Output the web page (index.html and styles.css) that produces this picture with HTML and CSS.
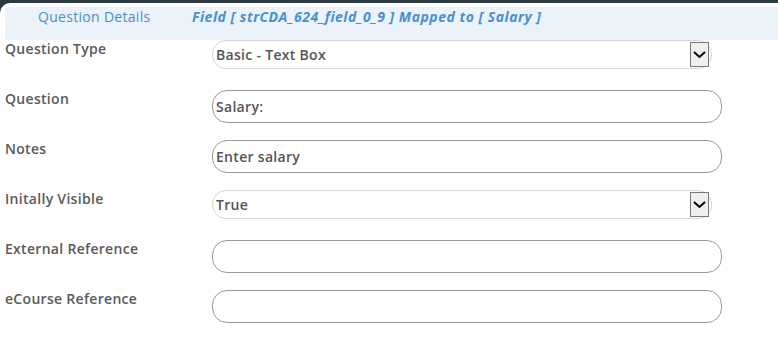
FILE: index.html
```html
<!DOCTYPE html>
<html>
<head>
  <meta charset='UTF-8'>
  <title>Question Details</title>
  <link rel="stylesheet" href="styles.css">
</head>
<body>
  <div class='painel'>
    <div class='faixa'>
      <span class='titulo'>Question Details</span>
      <span class='campo'>Field [ strCDA_624_field_0_9 ] Mapped to [ Salary ]</span>
    </div>

    <div class='linha'>
      <label class='rotulo'>Question Type</label>
      <div class='caixa-select'>
        <span class='valor'>Basic - Text Box</span>
        <span class='seta'><svg width='17' height='23' viewBox='0 0 17 23'><polyline points='3,9 8.5,14 14,9' fill='none' stroke='#000' stroke-width='2'/></svg></span>
      </div>
    </div>

    <div class='linha'>
      <label class='rotulo'>Question</label>
      <input class='campo-texto' type='text' value='Salary:'>
    </div>

    <div class='linha'>
      <label class='rotulo'>Notes</label>
      <input class='campo-texto' type='text' value='Enter salary'>
    </div>

    <div class='linha'>
      <label class='rotulo'>Initally Visible</label>
      <div class='caixa-select'>
        <span class='valor'>True</span>
        <span class='seta'><svg width='17' height='23' viewBox='0 0 17 23'><polyline points='3,9 8.5,14 14,9' fill='none' stroke='#000' stroke-width='2'/></svg></span>
      </div>
    </div>

    <div class='linha'>
      <label class='rotulo'>External Reference</label>
      <input class='campo-texto' type='text' value=''>
    </div>

    <div class='linha'>
      <label class='rotulo'>eCourse Reference</label>
      <input class='campo-texto' type='text' value=''>
    </div>
  </div>
</body>
</html>
```

FILE: styles.css
```css
body { margin: 0; background: #2c3940; font-family: "Open Sans", sans-serif; }
.painel { background: #fff; margin-top: 3px; border-top-left-radius: 10px; padding: 4px 0 0 5px; height: calc(100vh - 3px); box-sizing: border-box; }
.faixa { background: #ebf2f9; height: 33px; display: flex; align-items: flex-start; padding: 0 0 0 33px; box-sizing: border-box; font-size: 14px; line-height: 19px; letter-spacing: 0.3px; }
.titulo { color: #4a90c9; font-weight: 500; width: 154px; }
.campo { color: #4a90d0; font-weight: 700; font-style: italic; letter-spacing: 0.5px; }
.linha { display: flex; align-items: flex-start; height: 50px; }
.rotulo { width: 207px; color: #5a5a5a; font-size: 14px; font-weight: 600; line-height: 18px; letter-spacing: 0.3px; }
.caixa-select { position: relative; width: 500px; height: 29px; box-sizing: border-box; border: 1px solid #d4d4d4; border-radius: 14px; display: flex; align-items: center; padding-left: 3px; }
.valor { color: #555; font-size: 14px; font-weight: 600; letter-spacing: 0.3px; }
.seta { position: absolute; right: 2px; top: 1px; width: 19px; height: 25px; box-sizing: border-box; border: 1px solid #7a7a7a; background: #efefef; }
.seta svg { display: block; }
.campo-texto { width: 510px; height: 33px; box-sizing: border-box; border: 1px solid #9a9a9a; border-radius: 15px; padding: 0 3px; margin: 0; font-family: "Open Sans", sans-serif; font-size: 14px; font-weight: 600; letter-spacing: 0.3px; color: #555; outline: none; }
```
